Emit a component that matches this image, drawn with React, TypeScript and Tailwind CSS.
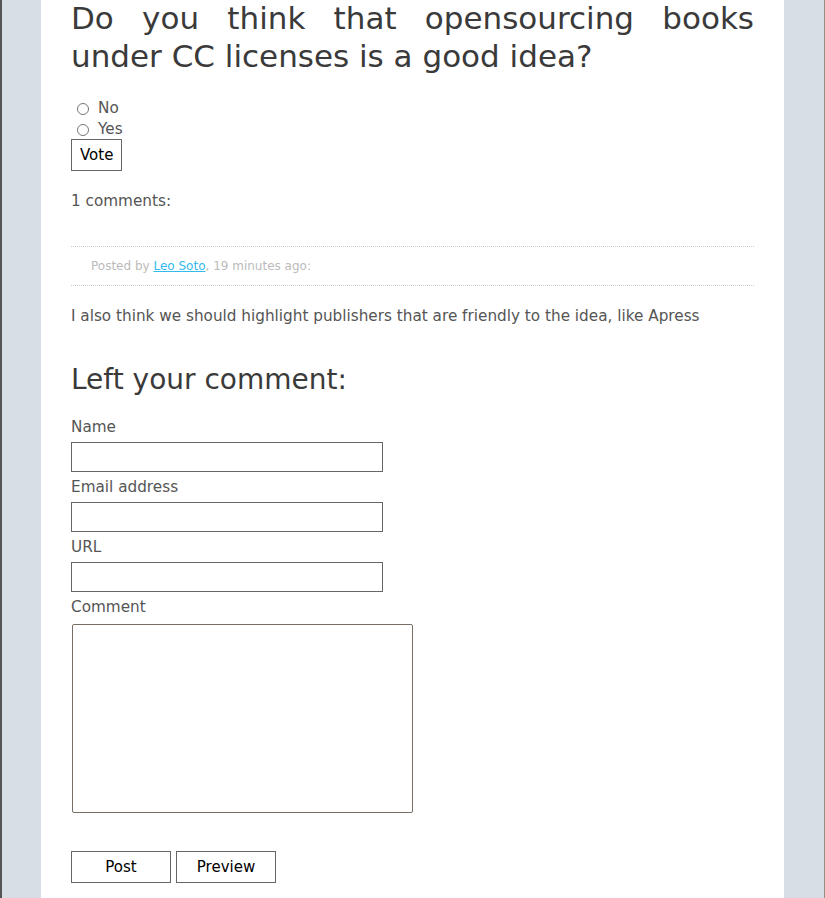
export default function App() {
    return (
        <div className="min-h-[898px] bg-[#d8dee6] border-l-2 border-l-[#555] border-r border-r-[#9a9082] overflow-hidden" style={{ fontFamily: '"DejaVu Sans", sans-serif' }}>
            <div className="ml-[39px] w-[743px] bg-white min-h-[898px] px-[30px] pb-[40px] text-[15.25px] text-[#555]">
                <h1 className="text-[31px] leading-[38px] text-[#3a3a3a] text-justify mt-[-1px]">
                    Do you think that opensourcing books under CC licenses is a good idea?
                </h1>

                <form className="mt-[23px]">
                    <label className="flex items-center h-[21px]">
                        <input type="radio" name="vote" className="ml-[6px] mr-[9px] w-[12px] h-[12px] accent-gray-500" />
                        No
                    </label>
                    <label className="flex items-center h-[21px]">
                        <input type="radio" name="vote" className="ml-[6px] mr-[9px] w-[12px] h-[12px] accent-gray-500" />
                        Yes
                    </label>
                    <button type="button" className="mt-[-1px] h-[32px] px-[8px] border border-[#666] bg-white text-black text-[15px]">
                        Vote
                    </button>
                </form>

                <p className="mt-[20px] leading-[20px]">1 comments:</p>

                <div className="mt-[35px] border-t border-dotted border-[#ccc]">
                    <p className="pl-[20px] h-[39px] flex items-center text-[12px] text-[#bbb] border-b border-dotted border-[#ccc]">
                        Posted by&nbsp;<a href="#" className="text-[#33bbee] underline">Leo Soto</a>, 19 minutes ago:
                    </p>
                </div>

                <p className="mt-[20px] leading-[20px]">
                    I also think we should highlight publishers that are friendly to the idea, like Apress
                </p>

                <h2 className="mt-[37px] text-[28px] leading-[34px] text-[#3a3a3a]">Left your comment:</h2>

                <div className="mt-[20px] flex flex-col">
                    <label className="leading-[20px] h-[20px]">Name</label>
                    <input type="text" className="mt-[5px] w-[312px] h-[30px] border border-[#666] bg-white" />
                    <label className="mt-[5px] leading-[20px] h-[20px]">Email address</label>
                    <input type="text" className="mt-[5px] w-[312px] h-[30px] border border-[#666] bg-white" />
                    <label className="mt-[5px] leading-[20px] h-[20px]">URL</label>
                    <input type="text" className="mt-[5px] w-[312px] h-[30px] border border-[#666] bg-white" />
                    <label className="mt-[5px] leading-[20px] h-[20px]">Comment</label>
                    <textarea className="mt-[7px] w-[341px] h-[189px] border border-[#776f66] rounded-[2px] bg-white resize-none ml-[1px]" />
                </div>

                <div className="mt-[38px] flex gap-[5px]">
                    <button type="button" className="w-[100px] h-[32px] border border-[#666] bg-white text-black text-[15px]">
                        Post
                    </button>
                    <button type="button" className="w-[100px] h-[32px] border border-[#666] bg-white text-black text-[15px]">
                        Preview
                    </button>
                </div>
            </div>
        </div>
    );
}
